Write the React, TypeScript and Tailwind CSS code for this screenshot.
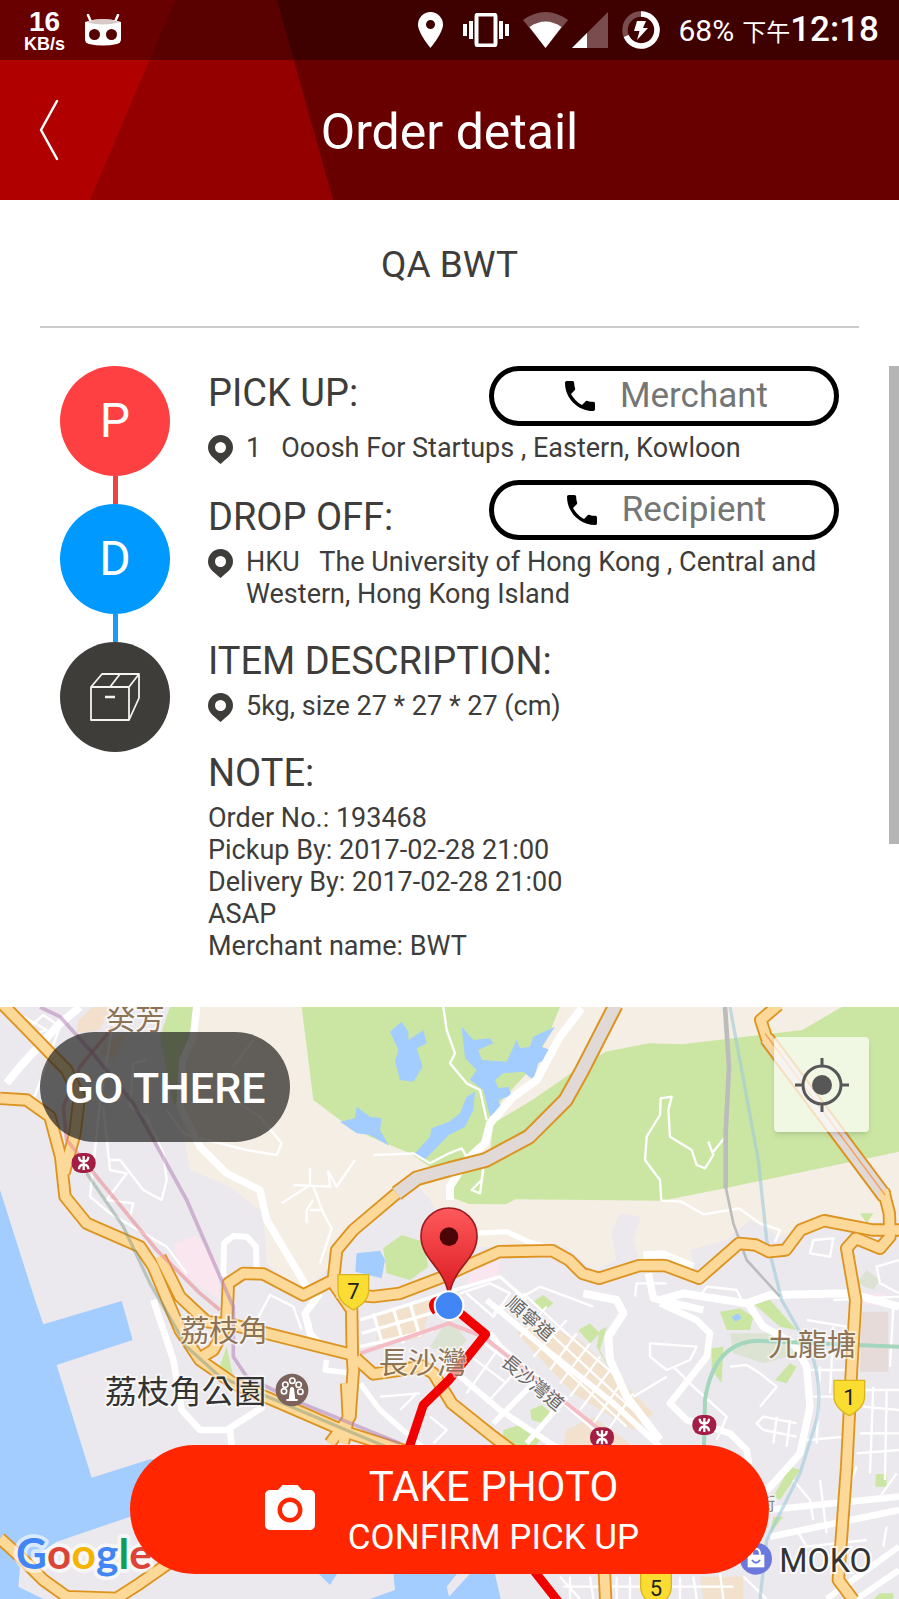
import type { ReactNode } from 'react';
import { MdCameraAlt, MdPhone } from 'react-icons/md';

type Road = { d: string; w?: number };

// Map geometry: three units per pixel
const HIGHWAYS: string[] = [
  'M0 1615L60 1670L130 1740L200 1790L350 1795L420 1750L520 1680',
  'M10 15L200 210L238 290L225 400L192 520',
  'M0 295L80 300L150 350L182 470L195 590L260 670L420 740L460 800L540 990L600 1080L700 1150L830 1205L1050 1300L1240 1360',
  'M480 770L540 890L620 965L700 975L1060 1065',
  'M590 1080L640 1050L680 975L685 850L730 820L790 822L910 885L1000 840L1010 750L1060 690L1190 580',
  'M1000 850L1055 930L1057 1065L1060 1110L1050 1250L990 1330',
  'M1040 1150L1045 1250L1030 1330',
  'M1010 880L1120 890L1200 880L1330 830L1417 790L1497 755L1657 752L1707 780L1747 820L1797 835L1917 797L1997 797L2097 835L2137 800L2217 730L2267 735L2307 755L2357 750L2402 690L2472 662L2617 690L2700 690',
  'M1068 1075L1120 1122L1190 1112L1265 1098L1300 1120L1355 1210L1480 1310L1560 1370',
  'M2335 15L2282 60L2300 115L2340 165',
  'M2650 570L2668 640L2670 710L2640 745L2567 715L2540 745L2567 900L2555 1100L2540 1400L2515 1740L2560 1800',
  'M1812 1690L1817 1800',
];

const TUNNELS: string[] = [
  'M1190 580L1250 535L1347 508L1457 480L1587 410L1697 300L1747 210L1847 15',
  'M2300 115L2655 590',
];

const STREETS: Road[] = [
  { d: 'M20 250L60 200L180 70L240 21', w: 24 },
  { d: 'M590 21L580 110L548 180L540 320L600 440L680 520L780 570L800 660L920 860', w: 22 },
  { d: 'M70 50L140 90L105 100M90 80L130 45L180 80L100 300' },
  { d: 'M340 60L300 310L285 450L270 590L330 640L500 740L560 820' },
  { d: 'M310 320L330 510L380 520L320 600L400 610L390 650M330 480L360 480L430 570L485 600L500 540L490 460L440 350L390 320L400 190L440 180' },
  { d: 'M500 330L550 400L620 420L740 450L830 465L845 430L780 350M700 300L780 350M700 200L760 120' },
  { d: 'M845 610L930 555L930 505M880 555L990 560L985 515L1010 560L1065 480M940 560L970 640L995 685L960 790M940 600L920 630L920 670M930 630L970 630' },
  { d: 'M670 830L672 730L700 708L740 710L768 740L770 820', w: 18 },
  { d: 'M1120 465L1240 460L1290 490L1347 460' },
  { d: 'M1330 21L1340 90L1365 160L1350 190L1400 250L1440 270L1460 360' },
  { d: 'M1745 25L1680 110L1610 240L1540 290L1470 370L1455 430L1400 480L1350 560L1350 600', w: 24 },
  { d: 'M1347 460L1385 445L1400 470L1450 500L1445 540L1415 570L1440 580L1450 510' },
  { d: 'M1984 602L1980 540L1935 480L1940 410L1980 345L1982 295L2015 290L2005 330L2010 410L2075 450L2090 495L2115 505L2140 465L2125 425M2140 455L2175 412' },
  { d: 'M1984 602L2045 605L2110 643L2217 625L2280 670L2340 690L2325 725' },
  { d: 'M1420 700L1520 695L1585 725L1650 745', w: 16 },
  { d: 'M1930 765L1990 762L2080 800M1945 820L1960 895L2110 930', w: 22 },
  { d: 'M460 900L520 1080L545 1230L600 1290L680 1290L790 1220M690 1290L695 1340', w: 20 },
  { d: 'M960 880L915 940L930 1000L965 1040', w: 22 },
  { d: 'M760 980L810 885L880 920L905 990' },
  { d: 'M980 1080L975 1110L1060 1120M1080 1150L1140 1230L1300 1370', w: 16 },
  { d: 'M1140 1190L1260 1180M1290 1250L1340 1290L1300 1330M1200 1230L1250 1180' },
  { d: 'M1347 1100L1500 1230L1650 1330L1790 1400M1470 1000L1500 1040L1640 1160L1790 1290', w: 18 },
  { d: 'M1460 900L1640 1050L1840 1210L1980 1340', w: 18 },
  { d: 'M1400 1060L1520 1150M1440 1020L1560 1110M1500 1040L1400 1180M1560 1100L1460 1210' },
  { d: 'M1080 960L1330 880L1500 830L1580 900M1085 1000L1310 935M1080 1040L1300 990M1120 940L1150 1040M1180 925L1210 1030M1230 910L1260 1010', w: 10 },
  { d: 'M1380 880L1470 850L1530 880L1480 950L1400 880M1480 940L1620 860L1780 920' },
  { d: 'M1530 910L1650 1000L1910 1240M1500 930L1620 1040L1880 1280M1570 880L1700 1000L1850 1130' },
  { d: 'M1640 920L1560 1010M1700 960L1600 1070M1730 1000L1650 1110M1770 1030L1680 1150M1800 1070L1710 1190M1830 1110L1740 1230M1870 1140L1780 1270M1900 1180L1810 1310' },
  { d: 'M1750 880L1850 900L1870 940L1825 1010L1830 1080L1880 1190L1980 1320', w: 24 },
  { d: 'M1620 1130L1480 1270M1700 1190L1580 1330', w: 16 },
  { d: 'M1980 910L2090 960L2130 1000L2120 1070L2010 1210L2060 1260L2190 1300L2240 1350L2250 1410', w: 20 },
  { d: 'M1980 900L2050 880L2240 910L2310 885L2550 880L2697 920', w: 24 },
  { d: 'M1950 1030L2090 1040L2070 1080L2000 1110L1950 1070ZM2020 1100L2080 1160L2180 1250L2150 1320M2000 1130L1900 1190' },
  { d: 'M2240 905L2290 980L2380 1030L2420 1100L2430 1220L2400 1360L2320 1450L2290 1480', w: 22 },
  { d: 'M2190 1100L2240 1095L2280 1120L2330 1160L2280 1220M2290 1290L2270 1270L2290 1250L2390 1270M2290 1290L2390 1310M2330 1250L2320 1330M2370 1260L2360 1340' },
  { d: 'M2440 720L2500 715L2490 770L2430 760ZM2697 780L2630 800L2640 850L2697 880M2500 900L2697 890M1905 890L1910 850L2000 850M2100 890L2120 860L2210 870L2230 910' },
  { d: 'M2420 960L2540 980M2430 1110L2550 1110M2440 1190L2540 1190M2420 1320L2540 1310M2460 1100L2450 1330M2500 980L2490 1180' },
  { d: 'M2590 1170L2697 1170M2590 1220L2697 1230M2580 1300L2697 1300M2570 1360L2697 1350M2620 1160L2610 1420M2660 1170L2655 1440M2680 920L2670 1100M2570 1400L2540 1480' },
  { d: 'M2300 1530L2697 1490M2310 1610L2697 1530', w: 20 },
  { d: 'M2390 1590L2420 1640L2600 1620M2440 1560L2430 1500L2380 1440M2480 1600L2460 1440M2640 1490L2690 1420M2660 1580L2650 1640' },
  { d: 'M2480 1797L2697 1640M2570 1797L2697 1710', w: 18 },
  { d: 'M1680 1730L1740 1797M1710 1730L1710 1797M1770 1730L1780 1797M1850 1730L1850 1797M1890 1730L1890 1797M2040 1730L2040 1797M2080 1730L2090 1797M1690 1760L2200 1760M2160 1720L2170 1797M2230 1730L2300 1797' },
];

const PARKS: string[] = [
  'M905 21H1680L1640 120L1580 220L1470 340L1455 430L1380 480L1290 500L1230 460L1110 410L1020 360L940 300Z',
  'M1817 155L1947 130L2047 133L2407 90L2525 21H2697V455L2197 560L1987 602L1547 598L1517 613L1407 612L1350 590L1357 520L1467 485L1480 370L1597 300L1727 210Z',
  'M510 21H583L575 100L540 200L545 320L520 310L480 110Z',
  'M1150 745L1205 705L1270 725L1285 800L1230 840L1160 820Z',
  'M680 1040L700 1130L655 1110Z',
  'M1600 905L1630 885L1660 910L1630 935Z',
  'M1735 990L1770 970L1800 1000L1770 1030ZM1800 990L1820 980L1800 1050L1835 1120L1790 1040Z',
  'M1590 1230L1625 1215L1655 1240L1630 1270L1595 1260ZM1510 1290L1560 1275L1620 1320L1600 1350L1510 1340Z',
  'M2160 935L2220 925L2260 950L2250 990L2180 990ZM2260 910L2310 900L2390 990L2340 980ZM2135 1045L2170 1040L2165 1150L2135 1110Z',
  'M2325 1140L2370 1090L2390 1100L2360 1150ZM2370 1400L2400 1410L2340 1500L2320 1490ZM2627 1422H2660V1460H2627ZM2580 640H2620L2600 670Z',
  'M2320 1550L2350 1550L2310 1600ZM2620 1797L2640 1780H2680V1797Z',
];

const LAKES: string[] = [
  'M1170 95L1205 65L1225 95L1225 120L1270 90L1280 130L1250 145L1268 200L1240 245L1200 240L1185 185L1195 150Z',
  'M1020 365L1065 355L1070 320L1110 350L1145 355L1140 390L1167 437L1110 405L1070 400Z',
  'M1245 460L1290 410L1295 385L1347 365L1380 340L1400 290L1425 275L1420 330L1395 380L1347 405L1270 483Z',
  'M1385 80L1420 120L1470 115L1480 130L1435 150L1445 180L1520 185L1550 120L1560 145L1590 140L1600 110L1665 80L1625 140L1650 150L1640 175L1615 190L1600 240L1570 215L1510 220L1485 240L1495 265L1525 260L1535 285L1495 300L1505 325L1470 350L1450 270L1410 240L1430 210L1395 175Z',
  'M1070 760L1140 752L1155 780L1145 835L1066 815Z',
  'M2195 950L2215 940L2225 955L2205 965Z',
];

const LABELS = [
  { text: '癸芳', x: 318, y: 87, size: 88, color: '#8d7355' },
  { text: '荔枝角', x: 540, y: 1024, size: 88, color: '#8d7355' },
  { text: '長沙灣', x: 1136, y: 1120, size: 88, color: '#8d7355' },
  { text: '九龍塘', x: 2305, y: 1066, size: 88, color: '#8d7355' },
  { text: '荔枝角公園', x: 314, y: 1208, size: 97, color: '#333333' },
];

const NOTES = [
  'Order No.: 193468',
  'Pickup By: 2017-02-28 21:00',
  'Delivery By: 2017-02-28 21:00',
  'ASAP',
  'Merchant name: BWT',
];

function StatusBar() {
  return (
    <div className="relative flex h-[60px] items-center justify-between bg-black/40 pr-5 pl-6 text-white">
      <div className="flex items-center gap-5">
        <div className="flex flex-col items-center font-['Liberation_Sans'] font-bold">
          <span className="text-[28px] leading-7">16</span>
          <span className="text-lg leading-4">KB/s</span>
        </div>
        <svg className="h-8 w-9" viewBox="0 0 36 32" fill="none">
          <path d="M3 1L6 8M33 1L30 8" stroke="#fff" strokeWidth="2.500" strokeLinecap="round" />
          <path d="M0 8Q18 2 36 8V25Q36 29 32 30Q18 33 4 30Q0 29 0 25Z" fill="#fff" />
          <path d="M1 8Q18 2 35 8Q18 13 1 8Z" fill="#d8c8c8" />
          <circle cx="9.500" cy="20.500" r="5.500" fill="#560000" />
          <circle cx="26.500" cy="20.500" r="5.500" fill="#560000" />
        </svg>
      </div>
      <div className="flex items-center">
        <svg className="h-9 w-[25px]" viewBox="0 0 25 36">
          <path fill="#fff" fillRule="evenodd" d="M12.500 0A12.500 12.500 0 0 0 0 12.500C0 21 12.500 36 12.500 36S25 21 25 12.500A12.500 12.500 0 0 0 12.500 0ZM12.500 8A4.500 4.500 0 1 1 12.500 17A4.500 4.500 0 1 1 12.500 8Z" />
        </svg>
        <svg className="ml-5 h-[34px] w-[46px]" viewBox="0 0 46 34" fill="#fff">
          <path d="M0 11h4v12H0zM6 8h4v18H6zM36 8h4v18h-4zM42 11h4v12h-4z" />
          <rect x="13.500" y="1.500" width="19" height="31" rx="2" fill="none" stroke="#fff" strokeWidth="4" />
        </svg>
        <svg className="ml-3.5 h-9 w-[45px]" viewBox="0 0 45 36" fill="#fff">
          <path d="M0 8Q22.500 -8 45 8L22.500 36Z" opacity="0.300" />
          <path d="M6.500 15Q22.500 4 38.500 15L22.500 36Z" />
        </svg>
        <svg className="ml-1 h-9 w-9" viewBox="0 0 36 36" fill="#fff">
          <path d="M36 0V36H0Z" opacity="0.300" />
          <path d="M15 21V36H0Z" />
        </svg>
        <svg className="ml-3.5 h-[38px] w-[38px]" viewBox="0 0 38 38">
          <circle cx="19" cy="19" r="16" fill="none" stroke="#fff" strokeOpacity="0.300" strokeWidth="5.500" />
          <path d="M19 3A16 16 0 1 1 4.200 25" fill="none" stroke="#fff" strokeWidth="5.500" />
          <path d="M15 10H24L21 17H26L15 29L17.500 20H12Z" fill="#fff" />
        </svg>
        <span className="ml-[18px] flex items-baseline">
          <span className="text-[30px] leading-10">68%</span>
          <span className="ml-2 font-['Noto_Sans_CJK_TC'] text-2xl leading-10">下午</span>
          <span className="text-[35px] leading-10 font-medium">12:18</span>
        </span>
      </div>
    </div>
  );
}

function Header() {
  return (
    <header className="relative bg-[#690000]">
      <svg className="absolute inset-0 h-full w-full" viewBox="0 0 899 200" preserveAspectRatio="none">
        <path d="M0 0H277L333 200H0Z" fill="#940000" />
        <path d="M0 0H175L90 200H0Z" fill="#b00000" />
      </svg>
      <StatusBar />
      <div className="relative grid h-[140px] grid-cols-[1fr_auto_1fr] items-center">
        <button type="button" aria-label="Back" className="ml-9 h-16 w-7 justify-self-start">
          <svg viewBox="0 0 28 64" fill="none">
            <path d="M21 3L5 32L21 61" stroke="#fff" strokeWidth="2.500" strokeLinecap="round" strokeLinejoin="round" />
          </svg>
        </button>
        <h1 className="pt-1 text-[50px] text-white">Order detail</h1>
      </div>
    </header>
  );
}

function CallButton({ label }: { label: string }) {
  return (
    <button
      type="button"
      className="flex h-[60px] w-[350px] items-center justify-center gap-5 rounded-full border-[5px] border-black bg-white text-[35px] text-[#757575]"
    >
      <MdPhone className="size-10 text-black" />
      {label}
    </button>
  );
}

function Place({ children }: { children: ReactNode }) {
  return (
    <div className="flex gap-[13px] leading-8">
      <svg className="mt-[3px] h-[29px] w-[25px] shrink-0" viewBox="0 0 25 29">
        <path fill="#3e3d39" fillRule="evenodd" d="M12.500 0A12.500 12.500 0 0 0 0 12.500C0 20 7 24 12.500 29C18 24 25 20 25 12.500A12.500 12.500 0 0 0 12.500 0ZM12.500 7A5.500 5.500 0 1 1 12.500 18A5.500 5.500 0 1 1 12.500 7Z" />
      </svg>
      <p className="whitespace-pre-wrap">{children}</p>
    </div>
  );
}

function Heading({ children }: { children: ReactNode }) {
  return <h2 className="pt-1 text-[38px] leading-[46px]">{children}</h2>;
}

function Timeline() {
  return (
    <div className="flex w-[110px] shrink-0 flex-col items-center text-5xl text-white">
      <div className="flex size-[110px] items-center justify-center rounded-full bg-[#ff4042]">P</div>
      <div className="h-7 w-[5px] bg-[#ec4145]" />
      <div className="flex size-[110px] items-center justify-center rounded-full bg-[#0099ff]">D</div>
      <div className="h-7 w-[5px] bg-[#1c9af0]" />
      <div className="flex size-[110px] items-center justify-center rounded-full bg-[#3e3d39]">
        <svg className="size-[50px]" viewBox="0 0 50 50" fill="none" stroke="#f4f3ef" strokeWidth="1.800" strokeLinejoin="round">
          <path d="M1 15H39V48H1ZM1 15L12 2H49L39 15M49 2V26L39 48M30 2L20 15" />
          <path d="M15 25H25" strokeWidth="2.500" />
        </svg>
      </div>
    </div>
  );
}

function OrderDetails() {
  return (
    <div className="relative h-[591px] overflow-hidden">
      <div className="flex gap-[38px] px-[60px]">
        <Timeline />
        <div className="flex-1 text-[27px] text-[#3e3d3b]">
          <section>
            <div className="flex items-start justify-between">
              <Heading>PICK UP:</Heading>
              <CallButton label="Merchant" />
            </div>
            <div className="pt-1.5">
              <Place>{'1   Ooosh For Startups , Eastern, Kowloon'}</Place>
            </div>
          </section>
          <section className="pt-4">
            <div className="flex items-end justify-between">
              <Heading>DROP OFF:</Heading>
              <CallButton label="Recipient" />
            </div>
            <div className="pt-1.5">
              <Place>{'HKU   The University of Hong Kong , Central and Western, Hong Kong Island'}</Place>
            </div>
          </section>
          <section className="pt-6">
            <Heading>ITEM DESCRIPTION:</Heading>
            <div className="pt-1.5">
              <Place>5kg, size 27 * 27 * 27 (cm)</Place>
            </div>
          </section>
          <section className="pt-6">
            <Heading>NOTE:</Heading>
            <div className="pt-1.5">
              {NOTES.map((line) => (
                <p key={line} className="leading-8">
                  {line}
                </p>
              ))}
            </div>
          </section>
        </div>
      </div>
      {/* Scroll thumb */}
      <div className="absolute top-0 right-0 h-[478px] w-2.5 bg-[#b5b5b5]" />
    </div>
  );
}

function Station({ x, y }: { x: number; y: number }) {
  return (
    <g transform={`translate(${x} ${y})`}>
      <rect x="-36" y="-30" width="72" height="60" rx="28" fill="#a31d45" />
      <path d="M0 -21V21M-14 -19Q-14 -5 0 -5Q14 -5 14 -19M-14 19Q-14 5 0 5Q14 5 14 19" fill="none" stroke="#fff" strokeWidth="7" />
    </g>
  );
}

function Shield({ x, y, label }: { x: number; y: number; label: string }) {
  return (
    <g transform={`translate(${x} ${y})`}>
      <path d="M-46 -52H46V-5Q46 30 0 54Q-46 30 -46 -5Z" fill="#fbdc30" stroke="#d9b51f" strokeWidth="4" />
      <text y="22" textAnchor="middle" fontSize="66" fill="#222">
        {label}
      </text>
    </g>
  );
}

function MapDrawing() {
  return (
    <svg className="absolute inset-0 h-full w-full" viewBox="0 21 2697 1776" preserveAspectRatio="xMidYMid slice">
      <defs>
        <linearGradient id="pin" x1="0" y1="0" x2="0" y2="1">
          <stop offset="0" stopColor="#ff5a5c" />
          <stop offset="1" stopColor="#d9181f" />
        </linearGradient>
      </defs>
      <rect y="21" width="2697" height="1776" fill="#ebe9ed" />
      <path
        fill="#f5eee4"
        d="M600 21H2697V660L2560 670L2480 640L2400 690L2340 710L2250 660L2180 720L2070 750L2080 790L2000 800L1860 790L1835 700L1850 640L1700 740L1430 740L1347 690L1290 600L1240 540L1190 600L1060 690L1000 790L910 880L800 790L790 640L690 560L570 510L555 430L540 330L580 100Z"
      />
      <path fill="#f5eee4" d="M1430 600H1900L1850 780L1780 810L1700 740H1500L1400 700Z" />
      <path fill="#ebe9ed" d="M1860 640L1920 650L1900 720L1920 790L1850 790L1835 700Z" />
      <path fill="#f3e0cc" d="M235 60L280 21H330L300 90L230 100ZM330 120L380 100L340 180L300 160Z" />
      <path fill="#f9e6ee" d="M520 730L590 705L650 780L660 900L600 860L540 820ZM1420 790L1500 780L1490 840L1400 860ZM2580 880H2660V915H2580Z" />
      <path fill="#e6dbd8" d="M2585 935H2665V1115H2580Z" />
      <path fill="#dde3d3" d="M1347 950L1400 1020L1360 1070L1290 1040ZM2190 1000L2320 1000L2400 1060L2290 1090L2200 1060ZM2600 810L2640 840L2620 870L2570 850Z" />
      <path fill="#f3dfc4" d="M1600 960L1740 1020L1960 1240L1900 1290L1720 1180L1550 1000ZM1700 1290L1780 1250L1900 1340H1690ZM1130 950L1290 900L1270 1010L1130 1040ZM2100 1730H2230V1797H2110Z" opacity="0.800" />
      {PARKS.map((d) => (
        <path key={d} d={d} fill="#cbe6a3" />
      ))}
      <g fill="#a3ccff">
        {LAKES.map((d) => (
          <path key={d} d={d} />
        ))}
        <path d="M0 570L105 900L130 973L365 903L398 1020L170 1095L275 1433L450 1378L800 1400L1480 1700L1502 1797H0Z" />
      </g>
      <path fill="#ebe9ed" d="M450 1530L170 1625L60 1700L55 1760L130 1797H1110L1185 1770L1180 1720L1100 1600ZM1347 1790L1420 1710H1380L1340 1760Z" />
      <path fill="#a3ccff" d="M950 1715H1015L990 1755Z" />

      <g fill="none" strokeLinejoin="round">
        {STREETS.map(({ d, w = 7 }) => (
          <path key={d} d={d} stroke="#fff" strokeWidth={w} />
        ))}
        <path d="M2177 560L2200 670L2240 780L2340 890" stroke="#bcbcbc" strokeWidth="8" />
        <path d="M2175 21L2187 200L2177 400V565" stroke="#bcbcbc" strokeWidth="14" />
        <path d="M2190 21L2275 480L2300 720L2345 900L2430 1050Q2470 1150 2450 1260L2400 1420L2300 1620L2280 1797" stroke="#9fcadb" strokeOpacity="0.600" strokeWidth="10" />
        <path d="M2112 1340L2115 1200Q2140 1030 2270 1022L2697 1040" stroke="#a3d6bd" strokeWidth="12" />
        <path d="M1080 1060L1347 970L1450 1010L1800 1290" stroke="#f4bcc4" strokeWidth="12" />

        {HIGHWAYS.map((d) => (
          <path key={d} d={d} stroke="#dd9320" strokeWidth="40" />
        ))}
        {TUNNELS.map((d) => (
          <path key={d} d={d} stroke="#dd9320" strokeWidth="48" />
        ))}
        {TUNNELS.map((d) => (
          <path key={d} d={d} stroke="#e0d9d5" strokeWidth="36" />
        ))}
        {HIGHWAYS.map((d) => (
          <path key={d} d={d} stroke="#fcd998" strokeWidth="29" />
        ))}
        <path d="M2295 100L2655 585" stroke="#f0a060" strokeWidth="4" />
        <path d="M120 21L180 50L270 150L400 310L560 600L660 830L700 920L700 1070L740 1130L880 1200L1200 1330" stroke="#b583b8" strokeOpacity="0.550" strokeWidth="11" />
        <path d="M340 80L240 200L190 320L200 420L290 530L470 750L600 880L660 930" stroke="#e8868e" strokeOpacity="0.550" strokeWidth="11" />
        <path d="M260 520L370 680L450 850L560 1040L660 1130L1180 1350" stroke="#6f8f7c" strokeOpacity="0.400" strokeWidth="10" />
        <path d="M1310 935Q1285 905 1325 900L1347 912L1457 1003L1347 1140L1270 1215L1225 1350M1600 1710L1675 1805" stroke="#f00000" strokeWidth="27" />
      </g>

      <g fontFamily="'Noto Sans CJK TC', sans-serif" stroke="#fff" strokeOpacity="0.600" strokeWidth="10" paintOrder="stroke">
        {LABELS.map(({ text, x, y, size, color }) => (
          <text key={text} x={x} y={y} fontSize={size} fill={color}>
            {text}
          </text>
        ))}
        <text transform="translate(1515 916) rotate(41)" fontSize="56" fill="#666">
          順寧道
        </text>
        <text transform="translate(1500 1091) rotate(40)" fontSize="56" fill="#666">
          長沙灣道
        </text>
        <text x="2272" y="1530" fontSize="54" fill="#888">
          街
        </text>
      </g>
      <text x="2338" y="1716" fontSize="97" fill="#333" stroke="#fff" strokeOpacity="0.800" strokeWidth="12" paintOrder="stroke">
        MOKO
      </text>

      <Station x={251} y={489} />
      <Station x={1806} y={1312} />
      <Station x={2113} y={1275} />
      <Shield x={1060} y={876} label="7" />
      <Shield x={2548} y={1193} label="1" />
      <Shield x={1968} y={1766} label="5" />

      {/* Park badge */}
      <g transform="translate(876 1170)">
        <circle r="49" fill="#7b625a" />
        <g fill="none" stroke="#fff" strokeWidth="5">
          <circle cx="-24" cy="4" r="8" />
          <circle cx="-20" cy="-16" r="8" />
          <circle cx="1" cy="-28" r="8" />
          <circle cx="20" cy="-16" r="8" />
          <circle cx="25" cy="5" r="8" />
        </g>
        <path d="M-10 30L-6 -5Q0 -14 6 -5L10 30ZM-17 27H17V33H-17Z" fill="#fff" />
      </g>
      {/* Shop badge */}
      <g transform="translate(2268 1676)">
        <circle r="48" fill="#6b78dc" />
        <path d="M-25 -12H25V26H-25Z" fill="#fff" />
        <path d="M-12 -12Q-12 -30 0 -30Q12 -30 12 -12" fill="none" stroke="#fff" strokeWidth="6" />
        <path d="M-12 4Q0 20 12 4" fill="none" stroke="#6b78dc" strokeWidth="6" />
      </g>

      {/* Destination pin and current position */}
      <path d="M1347 890C1335 800 1263 780 1263 708A84 84 0 0 1 1431 708C1431 780 1359 800 1347 890Z" fill="url(#pin)" stroke="#9c1c20" strokeWidth="5" />
      <circle cx="1347" cy="710" r="28" fill="#4c0507" />
      <circle cx="1347" cy="917" r="43" fill="#4285f4" stroke="#fff" strokeWidth="6" />

      <text x="48" y="1706" fontFamily="Lato, sans-serif" fontSize="128" fontWeight="700" stroke="#fff" strokeOpacity="0.600" strokeWidth="22" strokeLinejoin="round" paintOrder="stroke">
        <tspan fill="#4285f4">G</tspan>
        <tspan fill="#db4437">o</tspan>
        <tspan fill="#f4b400">o</tspan>
        <tspan fill="#4285f4">g</tspan>
        <tspan fill="#0f9d58">l</tspan>
        <tspan fill="#db4437">e</tspan>
      </text>
    </svg>
  );
}

function MapPanel() {
  return (
    <div className="relative flex min-h-[592px] flex-1 flex-col justify-between overflow-hidden">
      <MapDrawing />
      <div className="relative flex items-start justify-between pt-[25px] pr-[30px] pl-10">
        <button type="button" className="h-[110px] w-[250px] rounded-full bg-[#22211f]/70 pt-0.5 text-[43px] font-medium text-white">
          GO THERE
        </button>
        <button
          type="button"
          aria-label="My location"
          className="mt-[5px] flex size-[95px] items-center justify-center rounded-sm bg-white/70 shadow-md"
        >
          <svg className="size-[54px]" viewBox="0 0 54 54" fill="none" stroke="#575757" strokeWidth="3">
            <circle cx="27" cy="27" r="19" />
            <path d="M27 0V8M27 46V54M0 27H8M46 27H54" />
            <circle cx="27" cy="27" r="10" fill="#575757" stroke="none" />
          </svg>
        </button>
      </div>
      <button
        type="button"
        className="relative mx-[130px] mb-[25px] flex h-[129px] items-center justify-center gap-7 rounded-full bg-[#ff2600] text-white"
      >
        <MdCameraAlt className="size-[60px]" />
        <span className="flex flex-col items-center pt-1">
          <span className="text-[42px] leading-[52px]">TAKE PHOTO</span>
          <span className="text-[35px] leading-[50px]">CONFIRM PICK UP</span>
        </span>
      </button>
    </div>
  );
}

export default function App() {
  return (
    <div className="flex min-h-screen flex-col bg-white font-[Roboto,'Noto_Sans_CJK_TC',sans-serif]">
      <Header />
      <main className="flex flex-1 flex-col">
        <div className="mx-10 flex h-32 items-center justify-center border-b-2 border-[#cccccc] pt-1 text-[37px] text-[#3e3d3b]">
          QA BWT
        </div>
        <div className="pt-[38px] pb-[50px]">
          <OrderDetails />
        </div>
        <MapPanel />
      </main>
    </div>
  );
}
